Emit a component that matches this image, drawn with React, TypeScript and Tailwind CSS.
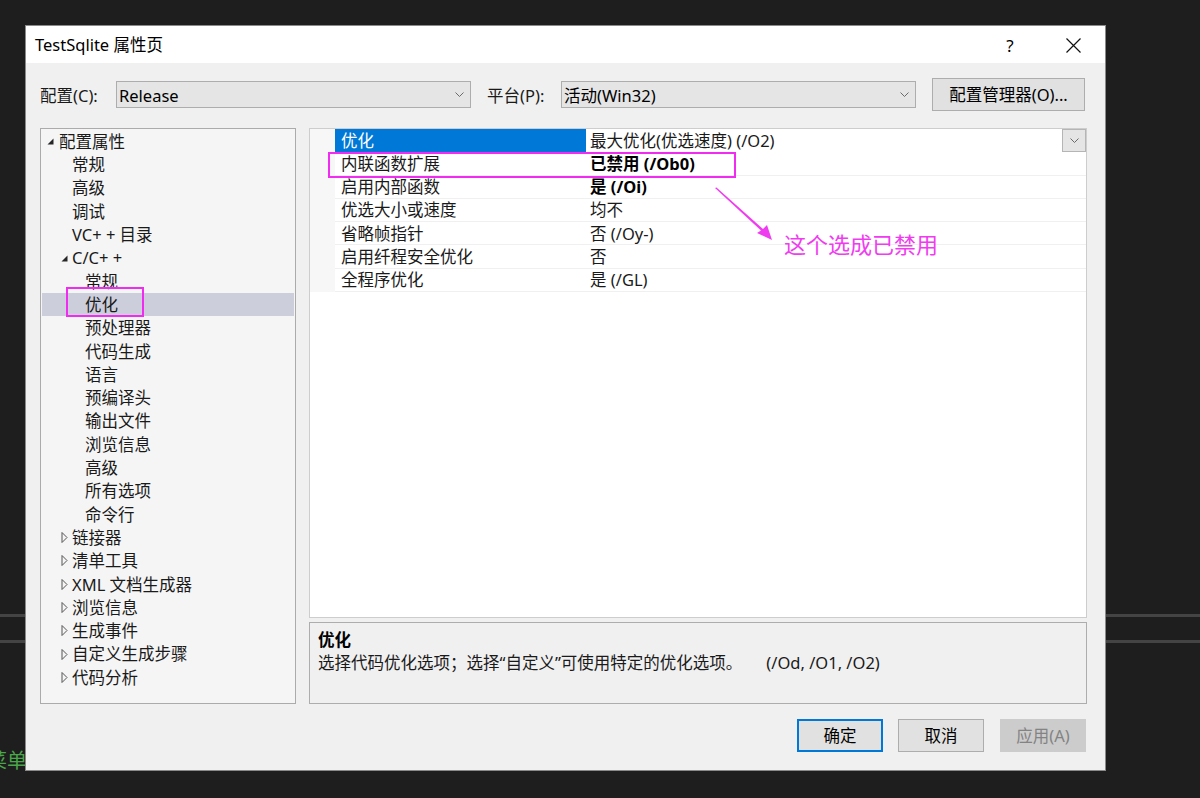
import React from 'react';

type TreeItem = { label: string; level: number; toggle?: 'open' | 'closed'; selected?: boolean };

const treeItems: TreeItem[] = [
  { label: '配置属性', level: 0, toggle: 'open' },
  { label: '常规', level: 1 },
  { label: '高级', level: 1 },
  { label: '调试', level: 1 },
  { label: 'VC+ + 目录', level: 1 },
  { label: 'C/C+ +', level: 1, toggle: 'open' },
  { label: '常规', level: 2 },
  { label: '优化', level: 2, selected: true },
  { label: '预处理器', level: 2 },
  { label: '代码生成', level: 2 },
  { label: '语言', level: 2 },
  { label: '预编译头', level: 2 },
  { label: '输出文件', level: 2 },
  { label: '浏览信息', level: 2 },
  { label: '高级', level: 2 },
  { label: '所有选项', level: 2 },
  { label: '命令行', level: 2 },
  { label: '链接器', level: 1, toggle: 'closed' },
  { label: '清单工具', level: 1, toggle: 'closed' },
  { label: 'XML 文档生成器', level: 1, toggle: 'closed' },
  { label: '浏览信息', level: 1, toggle: 'closed' },
  { label: '生成事件', level: 1, toggle: 'closed' },
  { label: '自定义生成步骤', level: 1, toggle: 'closed' },
  { label: '代码分析', level: 1, toggle: 'closed' },
];

const props = [
  { name: '优化', value: '最大优化(优选速度) (/O2)' },
  { name: '内联函数扩展', value: '已禁用 (/Ob0)', bold: true },
  { name: '启用内部函数', value: '是 (/Oi)', bold: true },
  { name: '优选大小或速度', value: '均不' },
  { name: '省略帧指针', value: '否 (/Oy-)' },
  { name: '启用纤程安全优化', value: '否' },
  { name: '全程序优化', value: '是 (/GL)' },
];

function Chevron() {
  return (
    <svg width="9" height="5" viewBox="0 0 9 5">
      <path d="M0.5 0.5 L4.5 4.5 L8.5 0.5" stroke="#6a6a6a" fill="none" strokeWidth="1" />
    </svg>
  );
}

function Toggle({ kind }: { kind: 'open' | 'closed' }) {
  if (kind === 'open') {
    return (
      <svg width="7" height="7" viewBox="0 0 7 7">
        <polygon points="6.5,0.5 6.5,6.5 0.5,6.5" fill="#262626" />
      </svg>
    );
  }
  return (
    <svg width="7" height="11" viewBox="0 0 7 11">
      <polygon points="1,0.5 6,5.5 1,10.5" fill="none" stroke="#555" strokeWidth="1" />
    </svg>
  );
}

function Dropdown({ text, width }: { text: string; width: string }) {
  return (
    <div className={`${width} h-[27px] bg-[#e5e5e5] border border-[#adadad] flex items-center pl-[2px] pr-[6px]`}>
      <span className="flex-1 pt-[3px] text-[16.5px] leading-none text-black">{text}</span>
      <Chevron />
    </div>
  );
}

export default function App() {
  return (
    <div className="relative w-[1200px] h-[798px] bg-[#1e1e1e] overflow-hidden pt-[25px] pl-[25px] font-['Noto_Sans','Noto_Sans_CJK_SC',sans-serif] text-[#1a1a1a]">
      {/* editor behind the dialog */}
      <div className="absolute left-0 right-0 top-[614px] h-[3px] bg-[#444]" />
      <div className="absolute left-0 right-0 top-[640px] h-[3px] bg-[#444]" />
      <div className="absolute left-[-13px] top-[751px] text-[20px] leading-none text-[#4aa64a]">菜单</div>

      <div className="relative z-10 w-[1081px] h-[746px] border border-[#8a8a8a] bg-[#f0f0f0] flex flex-col">
        {/* title bar */}
        <div className="h-[37px] bg-white flex items-center pl-[9px] pt-[2px]">
          <span className="flex-1 text-[16.5px] leading-none text-black">TestSqlite 属性页</span>
          <span className="w-[20px] text-center text-[17px] leading-none text-black mr-[46px]">?</span>
          <svg width="15" height="15" viewBox="0 0 15 15" className="mr-[24px]">
            <path d="M0.5 0.5 L14.5 14.5 M14.5 0.5 L0.5 14.5" stroke="#111" strokeWidth="1.2" />
          </svg>
        </div>

        <div className="flex-1 flex flex-col pl-[14px] pr-[18px]">
          {/* config row */}
          <div className="mt-[15px] h-[33px] flex items-center">
            <span className="w-[76px] pt-[3px] text-[16.5px] leading-none">配置(C):</span>
            <Dropdown text="Release" width="w-[355px]" />
            <span className="ml-[16px] w-[74px] pt-[3px] text-[16.5px] leading-none">平台(P):</span>
            <Dropdown text="活动(Win32)" width="w-[355px]" />
            <button className="ml-[16px] w-[153px] h-[33px] pt-[2px] bg-[#e1e1e1] border border-[#adadad] text-[16.5px] leading-none text-black">
              配置管理器(O)...
            </button>
          </div>

          {/* main */}
          <div className="mt-[17px] h-[576px] flex gap-[13px]">
            {/* tree */}
            <div className="relative w-[256px] h-full border border-[#ababab] bg-[#f5f5f5] px-[1px] pt-[1px]">
              {treeItems.map((it, i) => (
                <div
                  key={i}
                  className={`h-[23.3px] flex items-center text-[16.5px] leading-none ${it.selected ? 'bg-[#cccedb]' : ''}`}
                >
                  <div className={`${it.level === 0 ? 'w-[17px] pl-[5px]' : it.level === 1 ? 'w-[30px] pl-[19px]' : 'w-[43px]'} flex items-center`}>
                    {it.toggle && <Toggle kind={it.toggle} />}
                  </div>
                  <span className="pt-[1px]">{it.label}</span>
                </div>
              ))}
              <div className="absolute left-[25px] top-[158px] w-[78px] h-[30px] border-2 border-[#f02cf0]" />
            </div>

            {/* right column */}
            <div className="flex-1 flex flex-col gap-[4px]">
              <div className="relative h-[490px] border border-[#cdcdcd] bg-white">
                {props.map((p, i) => (
                  <div key={i} className="h-[23.3px] flex text-[16.5px] leading-none">
                    <div className="w-[25px] bg-[#f7f7f7]" />
                    <div
                      className={`w-[251px] flex items-center pl-[6px] pt-[1px] ${i === 0 ? 'bg-[#0078d7] text-white' : 'border-b border-[#f0f0f0]'}`}
                    >
                      {p.name}
                    </div>
                    <div className={`flex-1 flex items-center pl-[4px] ${i === 0 ? '' : 'border-b border-[#f0f0f0]'} ${p.bold ? 'font-bold text-black' : ''}`}>
                      <span className="flex-1 pt-[1px]">{p.value}</span>
                      {i === 0 && (
                        <div className="w-[24px] h-full bg-[#e5e5e5] border border-[#b5b5b5] flex items-center justify-center">
                          <Chevron />
                        </div>
                      )}
                    </div>
                  </div>
                ))}
                <div className="absolute left-[18px] top-[23px] w-[408px] h-[26px] border-2 border-[#f02cf0]" />
              </div>
              <div className="h-[82px] border border-[#adadad] bg-[#f0f0f0] pl-[8px] pt-[5px] text-[16.5px] leading-[23px]">
                <div className="font-bold text-black">优化</div>
                <div>
                  <span>选择代码优化选项；选择“自定义”可使用特定的优化选项。</span>
                  <span className="ml-[24px]">(/Od, /O1, /O2)</span>
                </div>
              </div>
            </div>
          </div>

          {/* buttons */}
          <div className="mt-[15px] flex justify-end gap-[15px] mr-[1px]">
            <button className="w-[86px] h-[33px] pt-[2px] bg-[#e1e1e1] border-2 border-[#0078d7] text-[16.5px] leading-none text-black">确定</button>
            <button className="w-[86px] h-[33px] pt-[2px] bg-[#e1e1e1] border border-[#adadad] text-[16.5px] leading-none text-black">取消</button>
            <button className="ml-[1px] w-[86px] h-[33px] pt-[2px] bg-[#cccccc] border border-[#cccccc] text-[16.5px] leading-none text-[#838383]">应用(A)</button>
          </div>
        </div>
      </div>

      {/* annotation */}
      <svg className="absolute left-0 top-0 z-20 pointer-events-none" width="1200" height="798">
        <polygon points="715,188 716.5,187.5 763,229 767,225 772,240 757,233 761,230.5" fill="#f03cf0" />
      </svg>
      <div className="absolute z-20 left-[784px] top-[233px] text-[22px] leading-none text-[#f03cf0]">这个选成已禁用</div>
    </div>
  );
}
